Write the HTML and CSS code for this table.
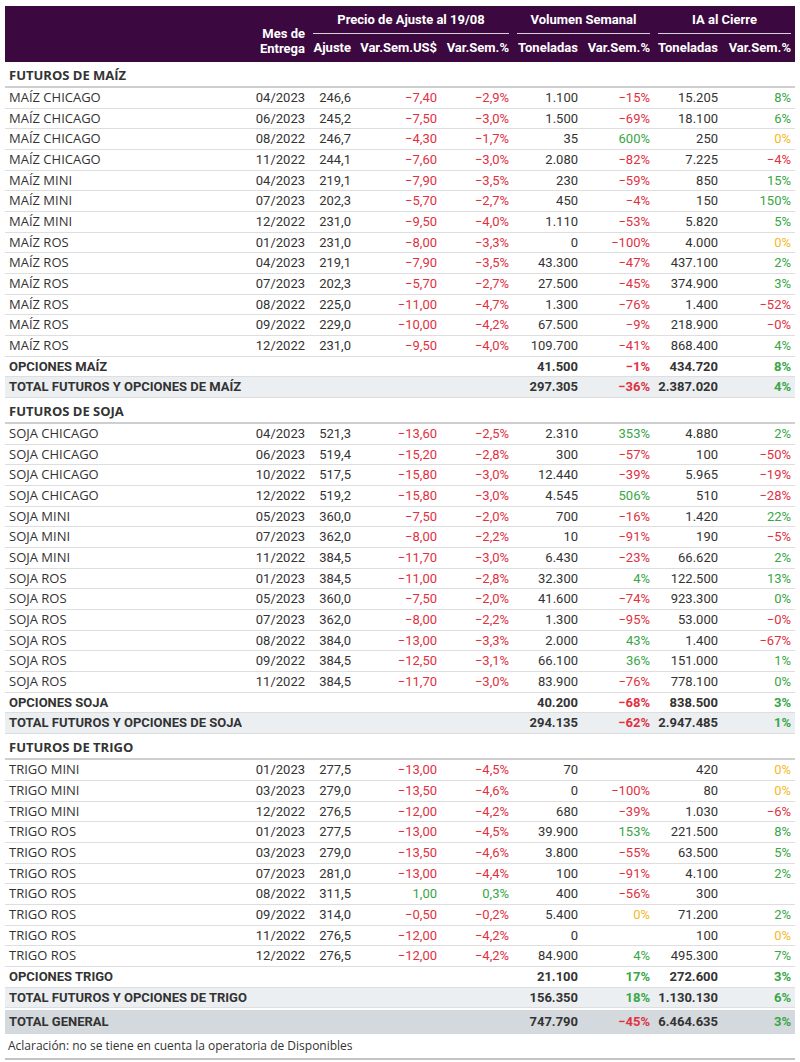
FILE: index.html
```html
<!DOCTYPE html>
<html lang="es">
<head>
<meta charset="utf-8">
<title>Futuros y opciones</title>
<link rel="stylesheet" href="styles.css">
</head>
<body>
<div class="wrap">
<table class="tbl">
<colgroup>
<col class="c-lab"><col class="c-mes"><col class="c-aj"><col class="c-us"><col class="c-pc"><col class="c-ton"><col class="c-pc"><col class="c-ton2"><col class="c-pc2">
</colgroup>
<thead>
<tr class="h1">
<th rowspan="2" class="hlab"></th>
<th rowspan="2" class="hmes">Mes de<br>Entrega</th>
<th colspan="3" class="grp"><div class="gline">Precio de Ajuste al 19/08</div></th>
<th colspan="2" class="grp"><div class="gline">Volumen Semanal</div></th>
<th colspan="2" class="grp"><div class="gline">IA al Cierre</div></th>
</tr>
<tr class="h2">
<th>Ajuste</th><th>Var.Sem.US$</th><th>Var.Sem.%</th><th>Toneladas</th><th>Var.Sem.%</th><th>Toneladas</th><th>Var.Sem.%</th>
</tr>
</thead>
<tbody>
<tr class="sec"><td colspan="9">FUTUROS DE MAÍZ</td></tr>
<tr><td class="lab">MAÍZ CHICAGO</td><td>04/2023</td><td>246,6</td><td class="n">−7,40</td><td class="n">−2,9%</td><td>1.100</td><td class="n">−15%</td><td>15.205</td><td class="p">8%</td></tr>
<tr><td class="lab">MAÍZ CHICAGO</td><td>06/2023</td><td>245,2</td><td class="n">−7,50</td><td class="n">−3,0%</td><td>1.500</td><td class="n">−69%</td><td>18.100</td><td class="p">6%</td></tr>
<tr><td class="lab">MAÍZ CHICAGO</td><td>08/2022</td><td>246,7</td><td class="n">−4,30</td><td class="n">−1,7%</td><td>35</td><td class="p">600%</td><td>250</td><td class="z">0%</td></tr>
<tr><td class="lab">MAÍZ CHICAGO</td><td>11/2022</td><td>244,1</td><td class="n">−7,60</td><td class="n">−3,0%</td><td>2.080</td><td class="n">−82%</td><td>7.225</td><td class="n">−4%</td></tr>
<tr><td class="lab">MAÍZ MINI</td><td>04/2023</td><td>219,1</td><td class="n">−7,90</td><td class="n">−3,5%</td><td>230</td><td class="n">−59%</td><td>850</td><td class="p">15%</td></tr>
<tr><td class="lab">MAÍZ MINI</td><td>07/2023</td><td>202,3</td><td class="n">−5,70</td><td class="n">−2,7%</td><td>450</td><td class="n">−4%</td><td>150</td><td class="p">150%</td></tr>
<tr><td class="lab">MAÍZ MINI</td><td>12/2022</td><td>231,0</td><td class="n">−9,50</td><td class="n">−4,0%</td><td>1.110</td><td class="n">−53%</td><td>5.820</td><td class="p">5%</td></tr>
<tr><td class="lab">MAÍZ ROS</td><td>01/2023</td><td>231,0</td><td class="n">−8,00</td><td class="n">−3,3%</td><td>0</td><td class="n">−100%</td><td>4.000</td><td class="z">0%</td></tr>
<tr><td class="lab">MAÍZ ROS</td><td>04/2023</td><td>219,1</td><td class="n">−7,90</td><td class="n">−3,5%</td><td>43.300</td><td class="n">−47%</td><td>437.100</td><td class="p">2%</td></tr>
<tr><td class="lab">MAÍZ ROS</td><td>07/2023</td><td>202,3</td><td class="n">−5,70</td><td class="n">−2,7%</td><td>27.500</td><td class="n">−45%</td><td>374.900</td><td class="p">3%</td></tr>
<tr><td class="lab">MAÍZ ROS</td><td>08/2022</td><td>225,0</td><td class="n">−11,00</td><td class="n">−4,7%</td><td>1.300</td><td class="n">−76%</td><td>1.400</td><td class="n">−52%</td></tr>
<tr><td class="lab">MAÍZ ROS</td><td>09/2022</td><td>229,0</td><td class="n">−10,00</td><td class="n">−4,2%</td><td>67.500</td><td class="n">−9%</td><td>218.900</td><td class="n">−0%</td></tr>
<tr><td class="lab">MAÍZ ROS</td><td>12/2022</td><td>231,0</td><td class="n">−9,50</td><td class="n">−4,0%</td><td>109.700</td><td class="n">−41%</td><td>868.400</td><td class="p">4%</td></tr>
<tr class="opt"><td class="lab">OPCIONES MAÍZ</td><td></td><td></td><td></td><td></td><td>41.500</td><td class="n">−1%</td><td>434.720</td><td class="p">8%</td></tr>
<tr class="tot"><td class="lab">TOTAL FUTUROS Y OPCIONES DE MAÍZ</td><td></td><td></td><td></td><td></td><td>297.305</td><td class="n">−36%</td><td>2.387.020</td><td class="p">4%</td></tr>

<tr class="sec"><td colspan="9">FUTUROS DE SOJA</td></tr>
<tr><td class="lab">SOJA CHICAGO</td><td>04/2023</td><td>521,3</td><td class="n">−13,60</td><td class="n">−2,5%</td><td>2.310</td><td class="p">353%</td><td>4.880</td><td class="p">2%</td></tr>
<tr><td class="lab">SOJA CHICAGO</td><td>06/2023</td><td>519,4</td><td class="n">−15,20</td><td class="n">−2,8%</td><td>300</td><td class="n">−57%</td><td>100</td><td class="n">−50%</td></tr>
<tr><td class="lab">SOJA CHICAGO</td><td>10/2022</td><td>517,5</td><td class="n">−15,80</td><td class="n">−3,0%</td><td>12.440</td><td class="n">−39%</td><td>5.965</td><td class="n">−19%</td></tr>
<tr><td class="lab">SOJA CHICAGO</td><td>12/2022</td><td>519,2</td><td class="n">−15,80</td><td class="n">−3,0%</td><td>4.545</td><td class="p">506%</td><td>510</td><td class="n">−28%</td></tr>
<tr><td class="lab">SOJA MINI</td><td>05/2023</td><td>360,0</td><td class="n">−7,50</td><td class="n">−2,0%</td><td>700</td><td class="n">−16%</td><td>1.420</td><td class="p">22%</td></tr>
<tr><td class="lab">SOJA MINI</td><td>07/2023</td><td>362,0</td><td class="n">−8,00</td><td class="n">−2,2%</td><td>10</td><td class="n">−91%</td><td>190</td><td class="n">−5%</td></tr>
<tr><td class="lab">SOJA MINI</td><td>11/2022</td><td>384,5</td><td class="n">−11,70</td><td class="n">−3,0%</td><td>6.430</td><td class="n">−23%</td><td>66.620</td><td class="p">2%</td></tr>
<tr><td class="lab">SOJA ROS</td><td>01/2023</td><td>384,5</td><td class="n">−11,00</td><td class="n">−2,8%</td><td>32.300</td><td class="p">4%</td><td>122.500</td><td class="p">13%</td></tr>
<tr><td class="lab">SOJA ROS</td><td>05/2023</td><td>360,0</td><td class="n">−7,50</td><td class="n">−2,0%</td><td>41.600</td><td class="n">−74%</td><td>923.300</td><td class="p">0%</td></tr>
<tr><td class="lab">SOJA ROS</td><td>07/2023</td><td>362,0</td><td class="n">−8,00</td><td class="n">−2,2%</td><td>1.300</td><td class="n">−95%</td><td>53.000</td><td class="n">−0%</td></tr>
<tr><td class="lab">SOJA ROS</td><td>08/2022</td><td>384,0</td><td class="n">−13,00</td><td class="n">−3,3%</td><td>2.000</td><td class="p">43%</td><td>1.400</td><td class="n">−67%</td></tr>
<tr><td class="lab">SOJA ROS</td><td>09/2022</td><td>384,5</td><td class="n">−12,50</td><td class="n">−3,1%</td><td>66.100</td><td class="p">36%</td><td>151.000</td><td class="p">1%</td></tr>
<tr><td class="lab">SOJA ROS</td><td>11/2022</td><td>384,5</td><td class="n">−11,70</td><td class="n">−3,0%</td><td>83.900</td><td class="n">−76%</td><td>778.100</td><td class="p">0%</td></tr>
<tr class="opt"><td class="lab">OPCIONES SOJA</td><td></td><td></td><td></td><td></td><td>40.200</td><td class="n">−68%</td><td>838.500</td><td class="p">3%</td></tr>
<tr class="tot"><td class="lab">TOTAL FUTUROS Y OPCIONES DE SOJA</td><td></td><td></td><td></td><td></td><td>294.135</td><td class="n">−62%</td><td>2.947.485</td><td class="p">1%</td></tr>

<tr class="sec"><td colspan="9">FUTUROS DE TRIGO</td></tr>
<tr><td class="lab">TRIGO MINI</td><td>01/2023</td><td>277,5</td><td class="n">−13,00</td><td class="n">−4,5%</td><td>70</td><td></td><td>420</td><td class="z">0%</td></tr>
<tr><td class="lab">TRIGO MINI</td><td>03/2023</td><td>279,0</td><td class="n">−13,50</td><td class="n">−4,6%</td><td>0</td><td class="n">−100%</td><td>80</td><td class="z">0%</td></tr>
<tr><td class="lab">TRIGO MINI</td><td>12/2022</td><td>276,5</td><td class="n">−12,00</td><td class="n">−4,2%</td><td>680</td><td class="n">−39%</td><td>1.030</td><td class="n">−6%</td></tr>
<tr><td class="lab">TRIGO ROS</td><td>01/2023</td><td>277,5</td><td class="n">−13,00</td><td class="n">−4,5%</td><td>39.900</td><td class="p">153%</td><td>221.500</td><td class="p">8%</td></tr>
<tr><td class="lab">TRIGO ROS</td><td>03/2023</td><td>279,0</td><td class="n">−13,50</td><td class="n">−4,6%</td><td>3.800</td><td class="n">−55%</td><td>63.500</td><td class="p">5%</td></tr>
<tr><td class="lab">TRIGO ROS</td><td>07/2023</td><td>281,0</td><td class="n">−13,00</td><td class="n">−4,4%</td><td>100</td><td class="n">−91%</td><td>4.100</td><td class="p">2%</td></tr>
<tr><td class="lab">TRIGO ROS</td><td>08/2022</td><td>311,5</td><td class="p">1,00</td><td class="p">0,3%</td><td>400</td><td class="n">−56%</td><td>300</td><td></td></tr>
<tr><td class="lab">TRIGO ROS</td><td>09/2022</td><td>314,0</td><td class="n">−0,50</td><td class="n">−0,2%</td><td>5.400</td><td class="z">0%</td><td>71.200</td><td class="p">2%</td></tr>
<tr><td class="lab">TRIGO ROS</td><td>11/2022</td><td>276,5</td><td class="n">−12,00</td><td class="n">−4,2%</td><td>0</td><td></td><td>100</td><td class="z">0%</td></tr>
<tr><td class="lab">TRIGO ROS</td><td>12/2022</td><td>276,5</td><td class="n">−12,00</td><td class="n">−4,2%</td><td>84.900</td><td class="p">4%</td><td>495.300</td><td class="p">7%</td></tr>
<tr class="opt"><td class="lab">OPCIONES TRIGO</td><td></td><td></td><td></td><td></td><td>21.100</td><td class="p">17%</td><td>272.600</td><td class="p">3%</td></tr>
<tr class="tot"><td class="lab">TOTAL FUTUROS Y OPCIONES DE TRIGO</td><td></td><td></td><td></td><td></td><td>156.350</td><td class="p">18%</td><td>1.130.130</td><td class="p">6%</td></tr>
<tr class="gen"><td class="lab">TOTAL GENERAL</td><td></td><td></td><td></td><td></td><td>747.790</td><td class="n">−45%</td><td>6.464.635</td><td class="p">3%</td></tr>
</tbody>
</table>
<p class="note">Aclaración: no se tiene en cuenta la operatoria de Disponibles</p>
</div>
</body>
</html>
```
FILE: styles.css
```css
body {
  margin: 0;
  background: #fff;
  color: #333;
  font-family: Roboto, "Liberation Sans", sans-serif;
}
.wrap {
  padding: 6px 5px 0 5px;
  width: 790px;
}
.tbl {
  width: 790px;
  table-layout: fixed;
  border-collapse: separate;
  border-spacing: 0;
  font-size: 13px;
}
.c-lab { width: 240px; }
.c-mes { width: 64px; }
.c-aj { width: 46px; }
.c-us { width: 86px; }
.c-pc { width: 72px; }
.c-ton { width: 69px; }
.c-ton2 { width: 68px; }
.c-pc2 { width: 73px; }

thead th {
  background: #3b0840;
  color: #fff;
  font-weight: 700;
  padding: 0 4px;
  text-align: right;
  white-space: nowrap;
}
.h1 th { height: 28px; }
.h2 th { height: 28px; line-height: 28px; vertical-align: middle; }
.hmes {
  vertical-align: bottom;
  line-height: 15px;
  padding-bottom: 6px;
}
.grp {
  text-align: center;
  vertical-align: top;
}
.gline {
  height: 27px;
  line-height: 27px;
  border-bottom: 1px solid #d9cfdb;
}

tbody td {
  padding: 0 4px;
  line-height: 19.67px;
  border-bottom: 1px solid #dedede;
  text-align: right;
  white-space: nowrap;
  color: #333;
}
tbody td.lab {
  text-align: left;
  font-family: "Open Sans", "Liberation Sans", sans-serif;
}
.n { color: #e0313f !important; }
.p { color: #38a646 !important; }
.z { color: #f5b81f !important; }

.sec td {
  text-align: left;
  font-family: "Open Sans", "Liberation Sans", sans-serif;
  font-weight: 700;
  padding-top: 3px;
  line-height: 21px;
  border-bottom: 2px solid #cfcfcf;
}
.opt td, .tot td, .gen td { font-weight: 700; }
.opt td.lab, .tot td.lab, .gen td.lab {
  font-family: Roboto, "Liberation Sans", sans-serif;
}
.tot td { background: #eceff1; }
.gen td {
  background: #d4d9dd;
  border-top: 2px solid #fff;
  border-bottom: none;
  line-height: 24px;
}
.note {
  margin: 0;
  font-family: "Open Sans", "Liberation Sans", sans-serif;
  font-size: 12px;
  line-height: 24px;
  padding-left: 3px;
  border-bottom: 2px solid #c4c4c4;
  color: #333;
}
```
